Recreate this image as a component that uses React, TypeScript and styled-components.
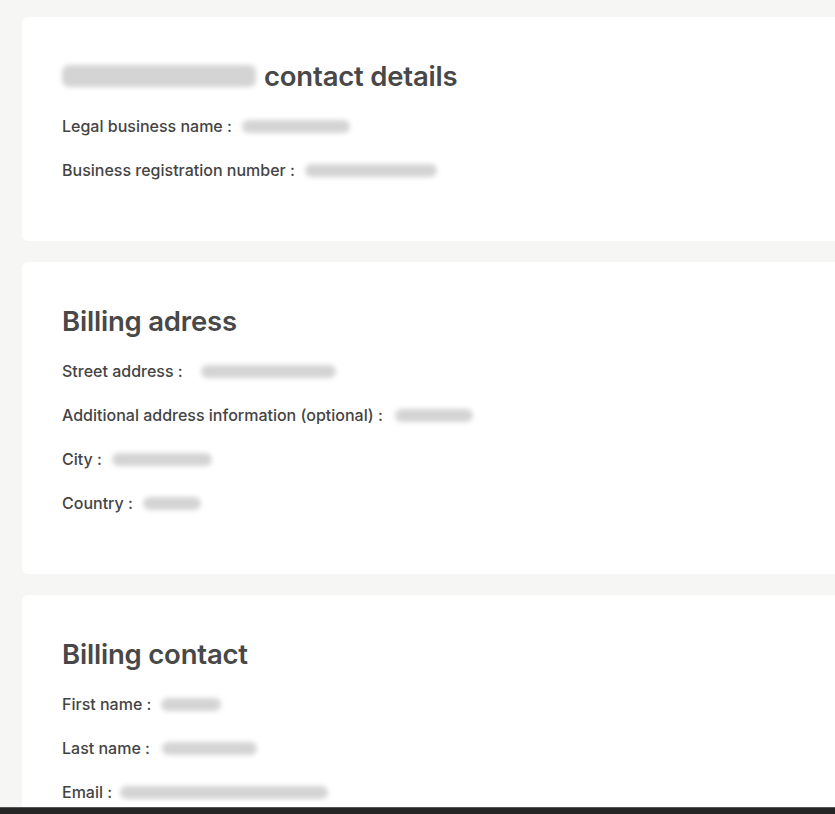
import React from 'react'
import styled, { createGlobalStyle } from 'styled-components'

const GlobalStyle = createGlobalStyle`
  html, body {
    margin: 0;
    padding: 0;
    background: #f6f6f5;
    overflow: hidden;
  }
  body {
    font-family: Inter, "Liberation Sans", sans-serif;
    color: #444;
  }
`

const Page = styled.div`
  display: flex;
  flex-direction: column;
  gap: 21px;
  padding: 17px 0 0 22px;
  width: 835px;
  height: 814px;
  overflow: hidden;
  box-sizing: border-box;
`

const Card = styled.section`
  flex-shrink: 0;
  width: 840px;
  background: #fff;
  border-radius: 6px;
  padding: 40px 40px 49px;
  box-sizing: border-box;
`

const Heading = styled.h2`
  display: flex;
  align-items: center;
  margin: 0 0 7px;
  height: 38px;
  padding-bottom: 2px;
  font-size: 27.5px;
  font-weight: 600;
  letter-spacing: -0.2px;
  color: #484848;
`

const Rows = styled.div`
  display: flex;
  flex-direction: column;
`

const Row = styled.div`
  display: flex;
  align-items: center;
  height: 44px;
  font-size: 16px;
  font-weight: 500;
  color: #444;
`

const Blur = styled.span<{ $w: number; $h?: number; $gap?: number }>`
  display: inline-block;
  width: ${p => p.$w}px;
  height: ${p => p.$h ?? 13}px;
  margin-left: ${p => p.$gap ?? 10}px;
  border-radius: 7px;
  background: #d4d4d4;
  filter: blur(2.5px);
`

const BottomBar = styled.div`
  position: fixed;
  left: 0;
  right: 0;
  bottom: 0;
  height: 6px;
  background: #252525;
  border-top: 1px solid #555;
`

interface IField {
  label: string
  w: number
  gap?: number
}

const sections: { title: string; fields: IField[] }[] = [
  {
    title: 'Billing adress',
    fields: [
      { label: 'Street address :', w: 135, gap: 18 },
      { label: 'Additional address information (optional) :', w: 78, gap: 12 },
      { label: 'City :', w: 100, gap: 10 },
      { label: 'Country :', w: 58, gap: 10 },
    ],
  },
  {
    title: 'Billing contact',
    fields: [
      { label: 'First name :', w: 60, gap: 10 },
      { label: 'Last name :', w: 95, gap: 12 },
      { label: 'Email :', w: 208, gap: 8 },
    ],
  },
]

const App = () => {
  return (
    <>
      <GlobalStyle />
      <Page>
        <Card>
          <Heading>
            <Blur $w={194} $h={22} $gap={0} style={{ marginRight: 8 }} />
            contact details
          </Heading>
          <Rows>
            <Row>Legal business name :<Blur $w={108} /></Row>
            <Row>Business registration number :<Blur $w={132} /></Row>
          </Rows>
        </Card>
        {sections.map(section => (
          <Card key={section.title}>
            <Heading>{section.title}</Heading>
            <Rows>
              {section.fields.map(field => (
                <Row key={field.label}>
                  {field.label}
                  <Blur $w={field.w} $gap={field.gap} />
                </Row>
              ))}
            </Rows>
          </Card>
        ))}
      </Page>
      <BottomBar />
    </>
  )
}

export default App
